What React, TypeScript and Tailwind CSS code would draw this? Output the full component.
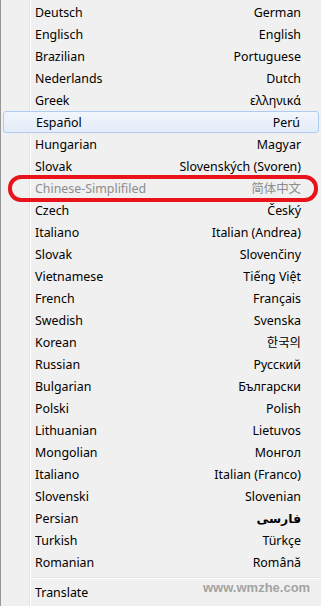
const LANGS: [string, string][] = [
  ["Deutsch", "German"],
  ["Englisch", "English"],
  ["Brazilian", "Portuguese"],
  ["Nederlands", "Dutch"],
  ["Greek", "ελληνικά"],
  ["Español", "Perú"],
  ["Hungarian", "Magyar"],
  ["Slovak", "Slovenských (Svoren)"],
  ["Chinese-Simplifiled", "简体中文"],
  ["Czech", "Český"],
  ["Italiano", "Italian (Andrea)"],
  ["Slovak", "Slovenčiny"],
  ["Vietnamese", "Tiếng Việt"],
  ["French", "Français"],
  ["Swedish", "Svenska"],
  ["Korean", "한국의"],
  ["Russian", "Русский"],
  ["Bulgarian", "Български"],
  ["Polski", "Polish"],
  ["Lithuanian", "Lietuvos"],
  ["Mongolian", "Монгол"],
  ["Italiano", "Italian (Franco)"],
  ["Slovenski", "Slovenian"],
  ["Persian", "فارسی"],
  ["Turkish", "Türkçe"],
  ["Romanian", "Română"],
];

const HOVER = 5;
const DISABLED = 8;
const PERSIAN = 23;

function Gutter() {
  return (
    <div className="flex h-full shrink-0">
      <div className="w-[29px] border-r border-[#e2e3e3]" />
      <div className="w-px bg-white" />
    </div>
  );
}

function Row({ left, right, idx }: { left: string; right: string; idx: number }) {
  const color = idx === DISABLED ? "text-[#8d8d8d]" : "text-black";
  const rightCls = idx === PERSIAN ? "font-bold" : "";

  if (idx === HOVER) {
    return (
      <div className="flex h-[22px] px-[2px]">
        <div className="flex h-full flex-1 items-center rounded-[3px] border border-[#aeccf1] bg-gradient-to-b from-[#f2f6fc] to-[#e3ecf8] pl-[32px] pr-[18px] pt-[2px] text-black">
          <span className="flex-1">{left}</span>
          <span>{right}</span>
        </div>
      </div>
    );
  }

  return (
    <div className={`flex h-[22px] items-center ${color}`}>
      <Gutter />
      <span className="flex-1 pl-[4px] pt-[2px]">{left}</span>
      <span className={`pr-[20px] pt-[2px] ${rightCls}`}>{right}</span>
    </div>
  );
}

export default function App() {
  return (
    <div
      className="relative h-[606px] w-[321px] overflow-hidden border-l border-[#979797] bg-[#f0f0f0] text-[12.4px]"
      style={{ fontFamily: '"Noto Sans", "DejaVu Sans", "Noto Sans CJK SC", sans-serif' }}
    >
      <div className="flex h-px">
        <Gutter />
      </div>

      {LANGS.map(([l, r], i) => (
        <Row key={i} left={l} right={r} idx={i} />
      ))}

      {/* separator */}
      <div className="flex h-[7px]">
        <Gutter />
        <div className="flex flex-1 flex-col justify-end pb-px">
          <div className="h-px bg-[#e2e3e3]" />
          <div className="h-px bg-white" />
        </div>
      </div>
      <div className="flex h-[24px] items-center text-black">
        <Gutter />
        <span className="flex-1 pl-[4px] pt-[2px]">Translate</span>
      </div>
      <div className="flex h-[4px]">
        <Gutter />
      </div>

      {/* red annotation */}
      <div className="pointer-events-none absolute left-[7px] top-[175px] h-[27px] w-[310px] rounded-[13px] border-[4px] border-[#e8131b]" />

      {/* watermark */}
      <div
        className="absolute left-[202px] top-[581px] text-[13px] font-bold leading-none text-[#a3a3a3]"
        style={{ fontFamily: '"Liberation Sans", Arial, sans-serif' }}
      >
        www.wmzhe.com
      </div>
    </div>
  );
}
